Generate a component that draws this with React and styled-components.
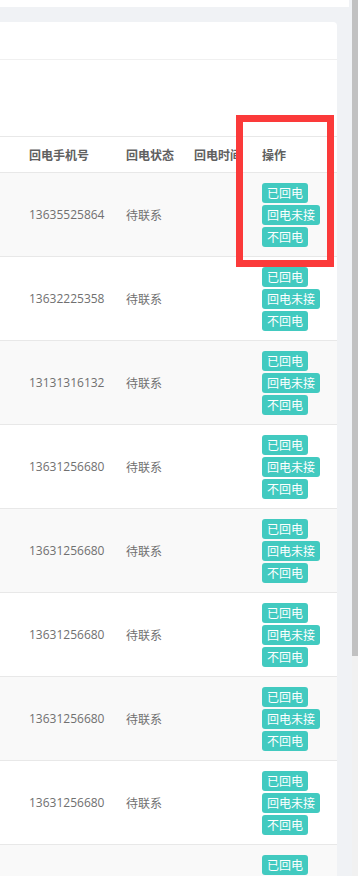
import React from 'react';
import styled, { createGlobalStyle } from 'styled-components';

const GlobalStyle = createGlobalStyle`
  html, body {
    margin: 0;
    padding: 0;
    overflow: hidden;
  }
  body {
    font-family: "Open Sans", "Noto Sans CJK SC", sans-serif;
  }
`;

const Screen = styled.div`
  display: flex;
  width: 358px;
  height: 876px;
  overflow: hidden;
  position: relative;
`;

const Main = styled.div`
  flex: 1;
  display: flex;
  flex-direction: column;
  background: #f0f2f5;
  overflow: hidden;
`;

const TopBar = styled.div`
  height: 7px;
  margin-right: 3px;
  background: #fff;
  flex: 0 0 auto;
`;

const Card = styled.div`
  margin: 15px 15px 0 0;
  background: #fff;
  border-top-right-radius: 4px;
  flex: 1;
`;

const CardHeader = styled.div`
  height: 37px;
  border-bottom: 1px solid #f0f0f0;
`;

const Toolbar = styled.div`
  height: 76px;
`;

const Table = styled.div`
  border-top: 1px solid #e8e8e8;
`;

const Row = styled.div`
  display: grid;
  grid-template-columns: 97px 68px 68px 1fr;
  align-items: center;
  padding-left: 29px;
  height: ${(p) => p.h}px;
  border-bottom: 1px solid #e8e8e8;
  background: ${(p) => (p.striped ? '#f9f9f9' : '#fff')};
`;

const HeadCell = styled.div`
  font-family: "Noto Sans CJK SC", sans-serif;
  font-size: 12px;
  font-weight: 700;
  color: #606060;
  white-space: nowrap;
  overflow: hidden;
`;

const Phone = styled.div`
  font-family: "Open Sans", sans-serif;
  font-size: 12px;
  color: #707070;
`;

const Status = styled.div`
  font-family: "Noto Sans CJK SC", sans-serif;
  font-size: 12px;
  color: #707070;
`;

const Actions = styled.div`
  display: flex;
  flex-direction: column;
  align-items: flex-start;
  gap: 2px;
  align-self: ${(p) => (p.top ? 'start' : 'center')};
  margin-top: ${(p) => (p.top ? '10px' : '0')};
`;

const ActionButton = styled.span`
  display: inline-block;
  height: 20px;
  line-height: 20px;
  padding: 0 5px;
  border-radius: 3px;
  background: #42cac0;
  color: #fff;
  font-family: "Noto Sans CJK SC", sans-serif;
  font-size: 12px;
`;

const ScrollTrack = styled.div`
  width: 6px;
  background: #f1f1f1;
  flex: 0 0 6px;
`;

const ScrollThumb = styled.div`
  height: 656px;
  background: #c1c1c1;
`;

const Highlight = styled.div`
  position: absolute;
  left: 236px;
  top: 115px;
  width: 98px;
  height: 152px;
  box-sizing: border-box;
  border: 7px solid #fb3a3a;
  pointer-events: none;
`;

const phones = [
  '13635525864',
  '13632225358',
  '13131316132',
  '13631256680',
  '13631256680',
  '13631256680',
  '13631256680',
  '13631256680',
];

export default function App() {
  return (
    <Screen>
      <GlobalStyle />
      <Main>
        <TopBar />
        <Card>
          <CardHeader />
          <Toolbar />
          <Table>
            <Row h={35}>
              <HeadCell>回电手机号</HeadCell>
              <HeadCell>回电状态</HeadCell>
              <HeadCell>回电时间</HeadCell>
              <HeadCell>操作</HeadCell>
            </Row>
            {phones.map((phone, i) => (
              <Row key={i} h={83} striped={i % 2 === 0}>
                <Phone>{phone}</Phone>
                <Status>待联系</Status>
                <div />
                <Actions>
                  <ActionButton>已回电</ActionButton>
                  <ActionButton>回电未接</ActionButton>
                  <ActionButton>不回电</ActionButton>
                </Actions>
              </Row>
            ))}
            <Row h={83} striped>
              <Phone />
              <Status />
              <div />
              <Actions top>
                <ActionButton>已回电</ActionButton>
                <ActionButton>回电未接</ActionButton>
                <ActionButton>不回电</ActionButton>
              </Actions>
            </Row>
          </Table>
        </Card>
      </Main>
      <ScrollTrack>
        <ScrollThumb />
      </ScrollTrack>
      <Highlight />
    </Screen>
  );
}
